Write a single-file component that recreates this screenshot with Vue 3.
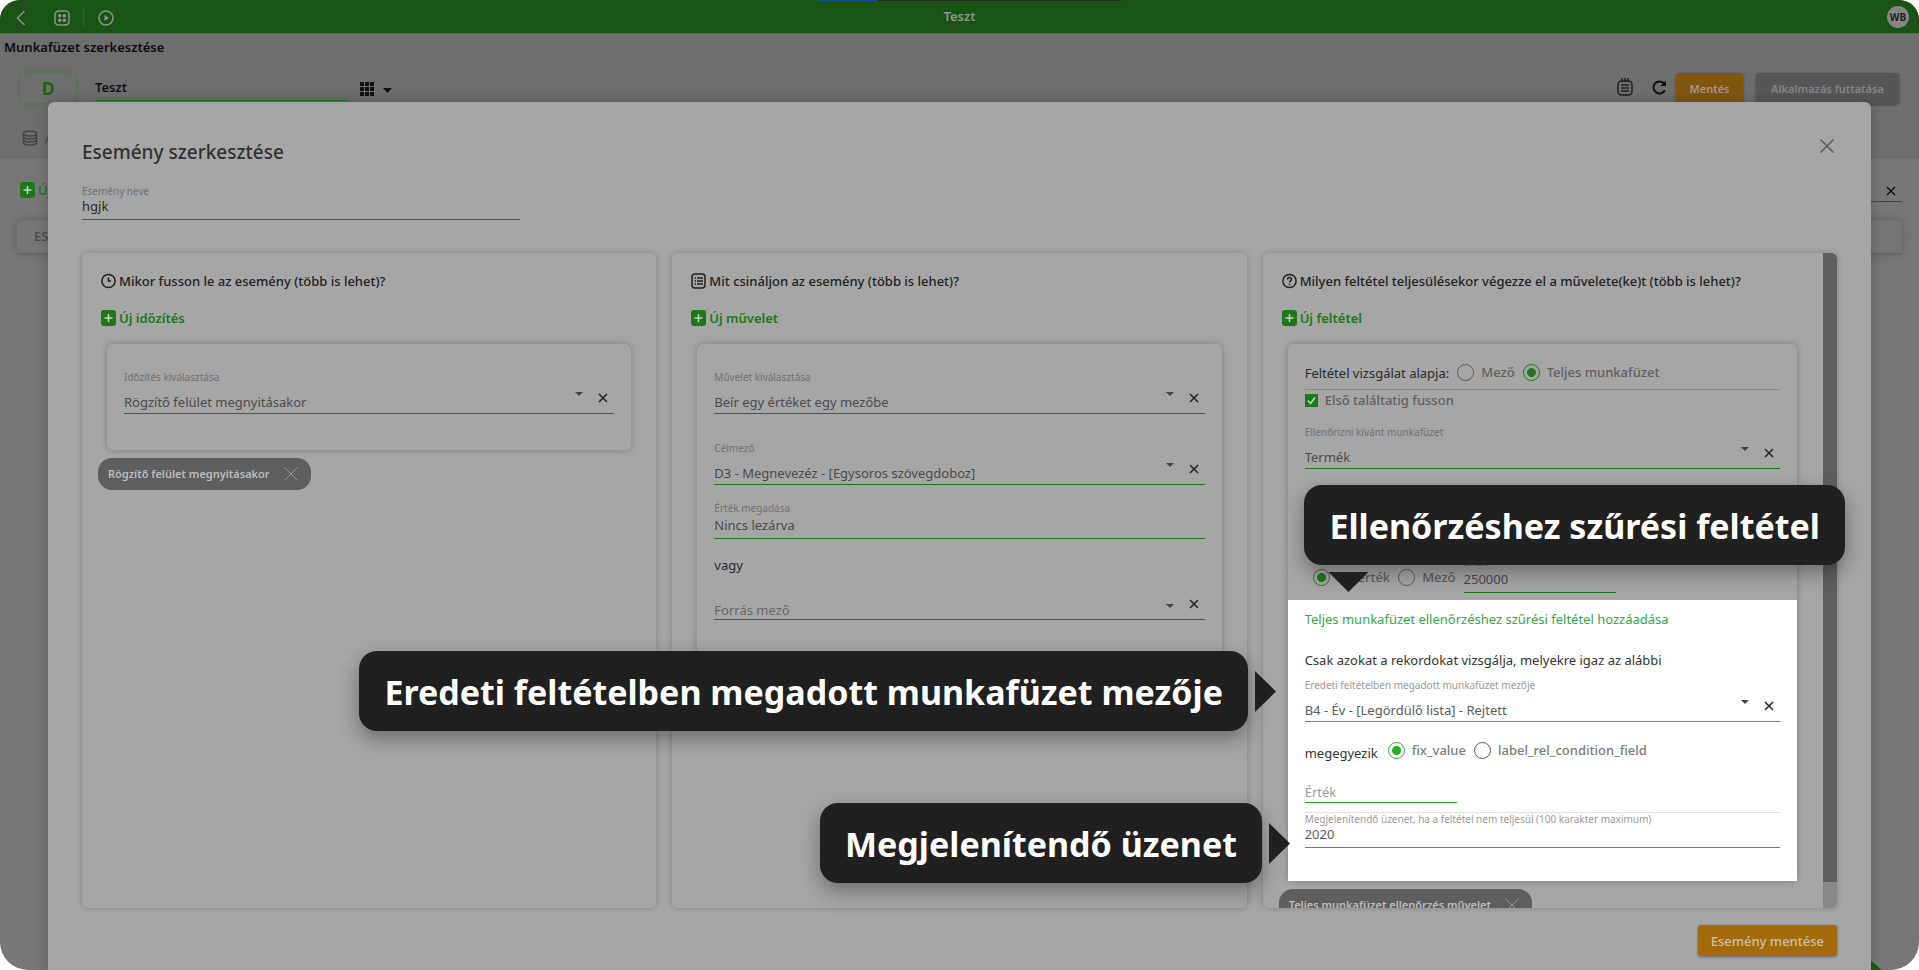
<script setup>
import { ref } from 'vue'

const workbookName = ref('Teszt')
const eventName = ref('hgjk')
const fieldValue = ref('Nincs lezárva')
const conditionValue = ref('250000')
const filterValue = ref('')
const message = ref('2020')
const basis = ref('workbook')
const valueKind = ref('fix')
const filterKind = ref('fix')
const firstMatch = ref(true)
</script>

<template>
  <div class="app">
    <header class="topbar">
      <nav class="topnav">
        <button class="icon-btn" aria-label="Vissza">
          <svg width="10" height="16" viewBox="0 0 10 16"><path d="M8.500 1 1.500 8l7 7" /></svg>
        </button>
        <button class="icon-btn apps" aria-label="Alkalmazások">
          <svg width="16" height="16" viewBox="0 0 16 16">
            <rect x="1" y="1" width="14" height="14" rx="3.500" />
            <g class="solid"><circle cx="5.700" cy="5.700" r="1.700" /><circle cx="10.300" cy="5.700" r="1.700" /><circle cx="5.700" cy="10.300" r="1.700" /><circle cx="10.300" cy="10.300" r="1.700" /></g>
          </svg>
        </button>
        <span class="nav-sep"></span>
        <button class="icon-btn" aria-label="Futtatás">
          <svg width="16" height="16" viewBox="0 0 16 16"><circle cx="8" cy="8" r="7" /><path class="solid" d="M6.500 5v6L11 8z" /></svg>
        </button>
      </nav>
      <span class="app-title">Teszt</span>
      <span class="avatar">WB</span>
      <span class="progress"></span>
    </header>

    <section class="workbook">
      <h1>Munkafüzet szerkesztése</h1>
      <div class="toolbar">
        <button class="badge-d">D</button>
        <div class="field name-field">
          <label for="wb-name">Név</label>
          <input id="wb-name" v-model="workbookName" />
        </div>
        <button class="icon-btn dark grid-btn" aria-label="Nézet">
          <svg width="33" height="14" viewBox="0 0 33 14">
            <path class="solid" d="M0 0h4v4H0zM5 0h4v4H5zM10 0h4v4h-4zM0 5h4v4H0zM5 5h4v4H5zM10 5h4v4h-4zM0 10h4v4H0zM5 10h4v4H5zM10 10h4v4h-4zM23 6h9l-4.500 5z" />
          </svg>
        </button>
        <div class="actions">
          <button class="icon-btn note" aria-label="Napló">
            <svg width="16" height="18" viewBox="0 0 16 18"><rect x="1" y="3" width="14" height="14" rx="3.500" /><path d="M5 0v4M8 0v4M11 0v4M4 7h8M4 10h8M4 13h8" /></svg>
          </button>
          <button class="icon-btn dark refresh" aria-label="Frissítés">
            <svg width="15" height="15" viewBox="0 0 15 15"><path class="heavy" d="M12.800 10.200A6 6 0 1 1 12 3.500" /><path class="solid" d="M14 .5V6H8.500z" /></svg>
          </button>
          <button class="btn save">Mentés</button>
          <button class="btn run">Alkalmazás futtatása</button>
        </div>
      </div>
      <div class="tabs">
        <svg width="16" height="16" viewBox="0 0 16 16"><ellipse cx="8" cy="3.500" rx="6.500" ry="2.500" /><path d="M1.500 3.500v9c0 1.400 2.900 2.500 6.500 2.500s6.500-1.100 6.500-2.500v-9M1.500 6.500C1.500 7.900 4.400 9 8 9s6.500-1.100 6.500-2.500M1.500 9.500C1.500 10.900 4.400 12 8 12s6.500-1.100 6.500-2.500" /></svg>
        <span>A</span>
      </div>
    </section>

    <section class="events">
      <div class="events-bar">
        <button class="add"><svg width="15" height="16" viewBox="0 0 15 16"><rect class="plus-bg" width="15" height="16" rx="3" /><path class="plus" d="M7.500 4v8M3.500 8h8" /></svg>Új</button>
        <div class="search"><button class="icon-btn dark" aria-label="Törlés"><svg width="10" height="10" viewBox="0 0 10 10"><path d="m1 1 8 8M9 1 1 9" /></svg></button></div>
      </div>
      <div class="events-head">ES</div>
    </section>

    <button class="fab" aria-label="Hozzáadás"></button>

    <main class="modal" role="dialog" aria-label="Esemény szerkesztése">
      <div class="modal-head">
        <h2>Esemény szerkesztése</h2>
        <button class="icon-btn close" aria-label="Bezárás"><svg width="14" height="14" viewBox="0 0 14 14"><path d="m.5.5 13 13M13.500.5l-13 13" /></svg></button>
      </div>
      <div class="field event-name">
        <label for="ev-name">Esemény neve</label>
        <input id="ev-name" v-model="eventName" />
      </div>

      <div class="columns">
        <section class="column">
          <h3><svg width="15" height="16" viewBox="0 0 15 16"><circle cx="7.500" cy="8" r="6.600" /><path d="M7.500 4.500V8H10" /></svg>Mikor fusson le az esemény (több is lehet)?</h3>
          <button class="add"><svg width="15" height="16" viewBox="0 0 15 16"><rect class="plus-bg" width="15" height="16" rx="3" /><path class="plus" d="M7.500 4v8M3.500 8h8" /></svg>Új időzítés</button>
          <div class="card timing">
            <div class="field">
              <label for="timing">Időzítés kiválasztása</label>
              <div class="pick">
                <select id="timing"><option>Rögzítő felület megnyitásakor</option></select>
                <svg class="caret" width="8" height="4" viewBox="0 0 8 4"><path d="M0 0h8L4 4z" /></svg>
                <button class="icon-btn clear" aria-label="Törlés"><svg width="10" height="10" viewBox="0 0 10 10"><path d="m1 1 8 8M9 1 1 9" /></svg></button>
              </div>
            </div>
          </div>
          <div class="chip">Rögzítő felület megnyitásakor<button class="icon-btn" aria-label="Eltávolítás"><svg width="14" height="14" viewBox="0 0 14 14"><path d="m.5.5 13 13M13.500.5l-13 13" /></svg></button></div>
        </section>

        <section class="column">
          <h3><svg width="15" height="16" viewBox="0 0 15 16"><rect x="1" y="1" width="13" height="14" rx="3" /><path d="M3.500 5h1.500M6 5h6M3.500 8h1.500M6 8h6M3.500 11h1.500M6 11h6" /></svg>Mit csináljon az esemény (több is lehet)?</h3>
          <button class="add"><svg width="15" height="16" viewBox="0 0 15 16"><rect class="plus-bg" width="15" height="16" rx="3" /><path class="plus" d="M7.500 4v8M3.500 8h8" /></svg>Új művelet</button>
          <div class="card action">
            <div class="field">
              <label for="action">Művelet kiválasztása</label>
              <div class="pick">
                <select id="action"><option>Beír egy értéket egy mezőbe</option></select>
                <svg class="caret" width="8" height="4" viewBox="0 0 8 4"><path d="M0 0h8L4 4z" /></svg>
                <button class="icon-btn clear" aria-label="Törlés"><svg width="10" height="10" viewBox="0 0 10 10"><path d="m1 1 8 8M9 1 1 9" /></svg></button>
              </div>
            </div>
            <div class="field target">
              <label for="target">Célmező</label>
              <div class="pick">
                <select id="target"><option>D3 - Megnevezéz - [Egysoros szövegdoboz]</option></select>
                <svg class="caret" width="8" height="4" viewBox="0 0 8 4"><path d="M0 0h8L4 4z" /></svg>
                <button class="icon-btn clear" aria-label="Törlés"><svg width="10" height="10" viewBox="0 0 10 10"><path d="m1 1 8 8M9 1 1 9" /></svg></button>
              </div>
            </div>
            <div class="field given">
              <label for="given">Érték megadása</label>
              <input id="given" v-model="fieldValue" />
            </div>
            <p class="or">vagy</p>
            <div class="pick empty">
              <select aria-label="Forrás mező"><option>Forrás mező</option></select>
              <svg class="caret" width="8" height="4" viewBox="0 0 8 4"><path d="M0 0h8L4 4z" /></svg>
              <button class="icon-btn clear" aria-label="Törlés"><svg width="10" height="10" viewBox="0 0 10 10"><path d="m1 1 8 8M9 1 1 9" /></svg></button>
            </div>
          </div>
        </section>

        <section class="column scrolling">
          <h3><svg width="15" height="16" viewBox="0 0 15 16"><circle cx="7.500" cy="8" r="6.600" /><path d="M5.500 6.400c0-2.600 4-2.600 4 0 0 1.500-2 1.500-2 3M7.500 10.800v1.400" /></svg>Milyen feltétel teljesülésekor végezze el a művelete(ke)t (több is lehet)?</h3>
          <button class="add"><svg width="15" height="16" viewBox="0 0 15 16"><rect class="plus-bg" width="15" height="16" rx="3" /><path class="plus" d="M7.500 4v8M3.500 8h8" /></svg>Új feltétel</button>
          <div class="card condition">
            <div class="choices basis">
              <span class="lead">Feltétel vizsgálat alapja:</span>
              <label><input v-model="basis" type="radio" name="basis" value="field" />Mező</label>
              <label><input v-model="basis" type="radio" name="basis" value="workbook" />Teljes munkafüzet</label>
            </div>
            <label class="check"><input v-model="firstMatch" type="checkbox" /><svg width="13" height="13" viewBox="0 0 13 13"><path d="m3 6.500 2.500 3L10 3.500" /></svg>Első találtatig fusson</label>
            <div class="field checked-book">
              <label for="book">Ellenőrizni kívánt munkafüzet</label>
              <div class="pick">
                <select id="book"><option>Termék</option></select>
                <svg class="caret" width="8" height="4" viewBox="0 0 8 4"><path d="M0 0h8L4 4z" /></svg>
                <button class="icon-btn clear" aria-label="Törlés"><svg width="10" height="10" viewBox="0 0 10 10"><path d="m1 1 8 8M9 1 1 9" /></svg></button>
              </div>
            </div>
            <div class="choices value-row">
              <label><input v-model="valueKind" type="radio" name="valueKind" value="fix" />Fix érték</label>
              <label><input v-model="valueKind" type="radio" name="valueKind" value="field" />Mező</label>
              <div class="field short">
                <label for="cond-value">Érték</label>
                <input id="cond-value" v-model="conditionValue" />
              </div>
            </div>

            <div class="spotlight">
              <h4>Teljes munkafüzet ellenőrzéshez szűrési feltétel hozzáadása</h4>
              <p>Csak azokat a rekordokat vizsgálja, melyekre igaz az alábbi</p>
              <div class="field origin">
                <label for="origin">Eredeti feltételben megadott munkafüzet mezője</label>
                <div class="pick">
                  <select id="origin"><option>B4 - Év - [Legördülő lista] - Rejtett</option></select>
                  <svg class="caret" width="8" height="4" viewBox="0 0 8 4"><path d="M0 0h8L4 4z" /></svg>
                  <button class="icon-btn clear" aria-label="Törlés"><svg width="10" height="10" viewBox="0 0 10 10"><path d="m1 1 8 8M9 1 1 9" /></svg></button>
                </div>
              </div>
              <div class="choices equals">
                <span class="lead">megegyezik</span>
                <label><input v-model="filterKind" type="radio" name="filterKind" value="fix" />fix_value</label>
                <label><input v-model="filterKind" type="radio" name="filterKind" value="field" />label_rel_condition_field</label>
              </div>
              <div class="field short blank">
                <input v-model="filterValue" aria-label="Érték" placeholder="Érték" />
              </div>
              <div class="field message">
                <label for="message">Megjelenítendő üzenet, ha a feltétel nem teljesül (100 karakter maximum)</label>
                <input id="message" v-model="message" />
              </div>
            </div>
          </div>
          <div class="chip">Teljes munkafüzet ellenőrzés művelet<button class="icon-btn" aria-label="Eltávolítás"><svg width="14" height="14" viewBox="0 0 14 14"><path d="m.5.5 13 13M13.500.5l-13 13" /></svg></button></div>
          <span class="scrollbar"><span class="thumb"></span></span>
        </section>
      </div>

      <footer class="modal-foot"><button class="btn confirm">Esemény mentése</button></footer>
    </main>

    <div class="callout filter">Ellenőrzéshez szűrési feltétel</div>
    <div class="callout side origin-tip">Eredeti feltételben megadott munkafüzet mezője</div>
    <div class="callout side message-tip">Megjelenítendő üzenet</div>
  </div>
</template>

<style>
body { margin: 0; background: #fff; }
</style>

<style scoped>
.app {
  --green: #20771b;
  --ink: #2a2a2a;
  --value: #4a4a4a;
  --muted: #717171;
  position: relative;
  height: 100vh;
  overflow: hidden;
  border-radius: 20px 20px 28px 28px;
  background: #777;
  color: var(--ink);
  font: 13px/16px "Noto Sans", "Open Sans", sans-serif;
}
* { box-sizing: border-box; }
h1, h2, h3, h4, p { margin: 0; font-weight: 500; }
button, input, select { margin: 0; padding: 0; border: 0; border-radius: 0; background: none; color: inherit; font: inherit; }
svg { display: block; flex: none; fill: none; stroke: currentColor; stroke-width: 1.500; }
svg .solid { fill: currentColor; stroke: none; }
svg .heavy { stroke-width: 2; }
.icon-btn { display: block; flex: none; }
.dark { color: #111; }

.topbar { position: relative; display: grid; grid-template-columns: 1fr auto 1fr; align-items: center; height: 34px; padding: 0 10px; border-bottom: 1px solid #4a6a48; background: #195414; color: #8e938e; }
.topnav { display: flex; align-items: center; padding: 3px 0 0 6px; }
.apps { margin-left: 28px; }
.nav-sep { width: 1px; height: 20px; margin: 0 14px 0 13px; background: #35602f; }
.app-title { padding-bottom: 1px; font-weight: 600; }
.avatar { justify-self: end; width: 22px; height: 22px; border-radius: 50%; background: #858585; color: #222; font-size: 10px; line-height: 22px; font-weight: 700; text-align: center; }
.progress { position: absolute; top: 0; left: 817px; width: 304px; height: 1px; background: linear-gradient(90deg, #11508a 20%, #232b23 20%); }

.workbook { display: flex; flex-direction: column; height: 124px; padding-top: 5px; border-bottom: 1px solid #666; background: #6e6e6e; }
h1 { padding-left: 4px; color: #0d0d0d; font-size: 13px; font-weight: 600; }
.toolbar { display: flex; align-items: flex-start; height: 75px; padding: 11px 20px 0; }
.badge-d { width: 56px; height: 30px; margin-top: 7px; border-radius: 8px; box-shadow: 0 0 4px #3f7a3b; color: #1a6415; font-size: 18px; font-weight: 700; line-height: 30px; }
.name-field { width: 252px; margin-left: 19px; color: #111; font-weight: 600; }
.name-field label { color: #464646; font-weight: 400; }
.grid-btn { margin: 16px 0 0 13px; }
.actions { display: flex; align-items: flex-start; margin: 7px 0 0 auto; }
.actions .note { margin-top: 5px; color: #222; }
.actions .refresh { margin: 7px 9px 0 19px; }
.btn { border-radius: 3px; font-weight: 600; box-shadow: 0 1px 3px rgba(0, 0, 0, .4); }
.save { width: 67px; height: 32px; background: #80560f; color: #a39a88; font-size: 11px; }
.run { width: 143px; height: 31px; margin-left: 13px; background: #555656; color: #858585; font-size: 11px; }
.tabs { display: flex; align-items: center; gap: 7px; height: 16px; padding: 0 22px; color: #444; }

.events { padding: 0 17px; }
.events-bar { display: flex; align-items: flex-start; justify-content: space-between; height: 62px; padding: 16px 0 0 3px; }
.events-bar .add { margin: 8px 0 0; color: #2b6a27; font-weight: 500; }
.search { display: flex; justify-content: flex-end; width: 260px; height: 28px; padding: 7px 6px 0; border-bottom: 1px solid #1f5f1b; }
.events-head { height: 34px; padding-left: 17px; border-bottom: 1px solid #666; border-radius: 6px 6px 0 0; background: #767676; box-shadow: 0 0 8px rgba(0, 0, 0, .2); color: #494949; line-height: 33px; font-weight: 500; }
.fab { position: absolute; right: 33px; bottom: -44px; width: 56px; height: 56px; border-radius: 50%; background: #1a5c15; }

.modal { position: absolute; inset: 102px 48px 0; display: flex; flex-direction: column; padding: 36px 34px 14px; border-radius: 6px 6px 0 0; background: #a6a6a6; box-shadow: 0 0 12px rgba(0, 0, 0, .25); }
.modal-head { display: flex; align-items: flex-start; justify-content: space-between; }
h2 { color: #313131; font-size: 19px; line-height: 28px; }
.close { padding: 1px 3px 0 0; color: #585858; }
.event-name { width: 438px; margin-top: 19px; }

.field { display: block; }
.field > label { display: block; color: var(--muted); font-size: 10px; line-height: 12px; }
.field > input { display: block; width: 100%; height: 23px; padding: 1px 0 5px; border-bottom: 1px solid var(--green); line-height: 16px; outline: 0; }
.card .field > input { color: var(--value); }
.pick { position: relative; display: flex; align-items: flex-start; height: 28px; border-bottom: 1px solid var(--green); }
.field > .pick { margin-top: 3px; }
.pick select { flex: 1; appearance: none; height: 27px; padding-top: 4px; color: var(--value); line-height: 20px; outline: 0; }
.caret { position: absolute; right: 31px; top: 6px; fill: #444; stroke: none; }
.clear { margin: 7px 6px 0 0; color: #222; }
.empty select { padding-top: 9px; line-height: 18px; color: #666; }
.empty .caret { top: 12px; }

.columns { display: grid; grid-template-columns: repeat(3, minmax(0, 1fr)); gap: 16px; flex: 1; min-height: 0; margin-top: 33px; }
.column { min-width: 0; padding: 20px 16px 0; border-radius: 6px; box-shadow: 0 0 6px rgba(0, 0, 0, .22); }
h3, .add { display: flex; align-items: center; gap: 3px; margin-left: 3px; }
h3 { font-size: 13px; white-space: nowrap; color: #222; }
.add { margin-top: 21px; color: var(--green); font-weight: 600; }
.plus-bg { fill: var(--green); stroke: none; }
.plus { stroke: #c4d3c3; }
.card { margin: 18px 9px 0; border-radius: 6px; box-shadow: 0 0 7px rgba(0, 0, 0, .25); }
.timing { padding: 27px 17px 36px; }
.action { padding: 27px 17px 60px; }
.target { margin-top: 28px; }
.given { margin-top: 17px; }
.or { margin: 18px 0 19px; font-weight: 400; }
.chip { display: flex; align-items: center; gap: 14px; width: max-content; height: 32px; margin-top: 8px; padding: 0 13px 0 10px; border-radius: 14px; background: #5e5e5e; color: #bdbdbd; font-size: 11px; font-weight: 600; }
.chip .icon-btn { color: #999; }
.chip svg { stroke-width: 1; }

.scrolling { position: relative; overflow: hidden; padding-right: 31px; }
.scrollbar { position: absolute; top: 0; right: 0; bottom: 0; width: 14px; background: #888; }
.thumb { display: block; height: 96%; background: #5e5e5e; }
.condition { padding: 20px 17px 0; }
.choices { display: flex; align-items: flex-start; gap: 8px; }
.choices > label { display: flex; align-items: flex-start; gap: 7px; color: #5f5f5f; font-weight: 500; }
.choices input[type="radio"] { appearance: none; width: 17px; height: 17px; border: 1px solid #5a5a5a; border-radius: 50%; }
.choices input[type="radio"]:checked { border-color: var(--green); background: radial-gradient(circle, var(--green) 4px, transparent 5px); }
.lead { padding-top: 1px; }
.basis { height: 26px; border-bottom: 1px solid #888; }
.check { display: flex; align-items: center; gap: 7px; margin-top: 2px; color: #5f5f5f; font-weight: 500; }
.check input { position: absolute; opacity: 0; }
.check svg { background: var(--green); color: #c9d6c8; }
.checked-book { margin-top: 18px; }
.value-row { align-items: flex-end; margin-top: 87px; padding-left: 8px; }
.value-row > label { margin-bottom: 7px; }
.short { width: 152px; }
.value-row .short > input, .given > input { height: 25px; padding: 3px 0 5px; }
.spotlight { --green: #27b021; --value: #5c5c5c; --muted: #9a9a9a; margin: 7px -17px 0; padding: 11px 17px 33px; background: #fff; color: #333; }
.spotlight h4 { color: #2fa84a; font-size: 13px; font-weight: 400; }
.spotlight p { margin-top: 25px; font-weight: 400; }
.origin { margin-top: 11px; }
.equals { margin-top: 20px; }
.equals .lead { padding: 3px 2px 0 0; }
.spotlight .choices > label { color: #7c7c7c; }
.blank { margin-top: 21px; }
.blank > input { height: 21px; padding: 2px 0; }
.blank > input::placeholder { color: #9a9a9a; opacity: 1; }
.message { margin-top: 9px; border-top: 1px solid #e2e2e2; }

.modal-foot { display: flex; justify-content: flex-end; padding-top: 17px; }
.confirm { height: 31px; padding: 0 13px; background: #a36b0d; color: #cdbfa6; font-weight: 500; }

.callout { position: absolute; height: 80px; padding: 0 25px; border-radius: 18px; background: #202020; box-shadow: 0 8px 20px rgba(0, 0, 0, .35); color: #fff; font-size: 34px; line-height: 82px; font-weight: 700; white-space: nowrap; }
.callout::after { content: ""; position: absolute; background: #202020; }
.filter { top: 485px; right: 74px; }
.filter::after { left: 24px; top: 87px; width: 40px; height: 20px; clip-path: polygon(0 0, 100% 0, 50% 100%); }
.side::after { right: -28px; top: 20px; width: 21px; height: 41px; clip-path: polygon(0 0, 100% 50%, 0 100%); }
.origin-tip { top: 651px; right: 671px; }
.message-tip { top: 803px; right: 657px; }
</style>
